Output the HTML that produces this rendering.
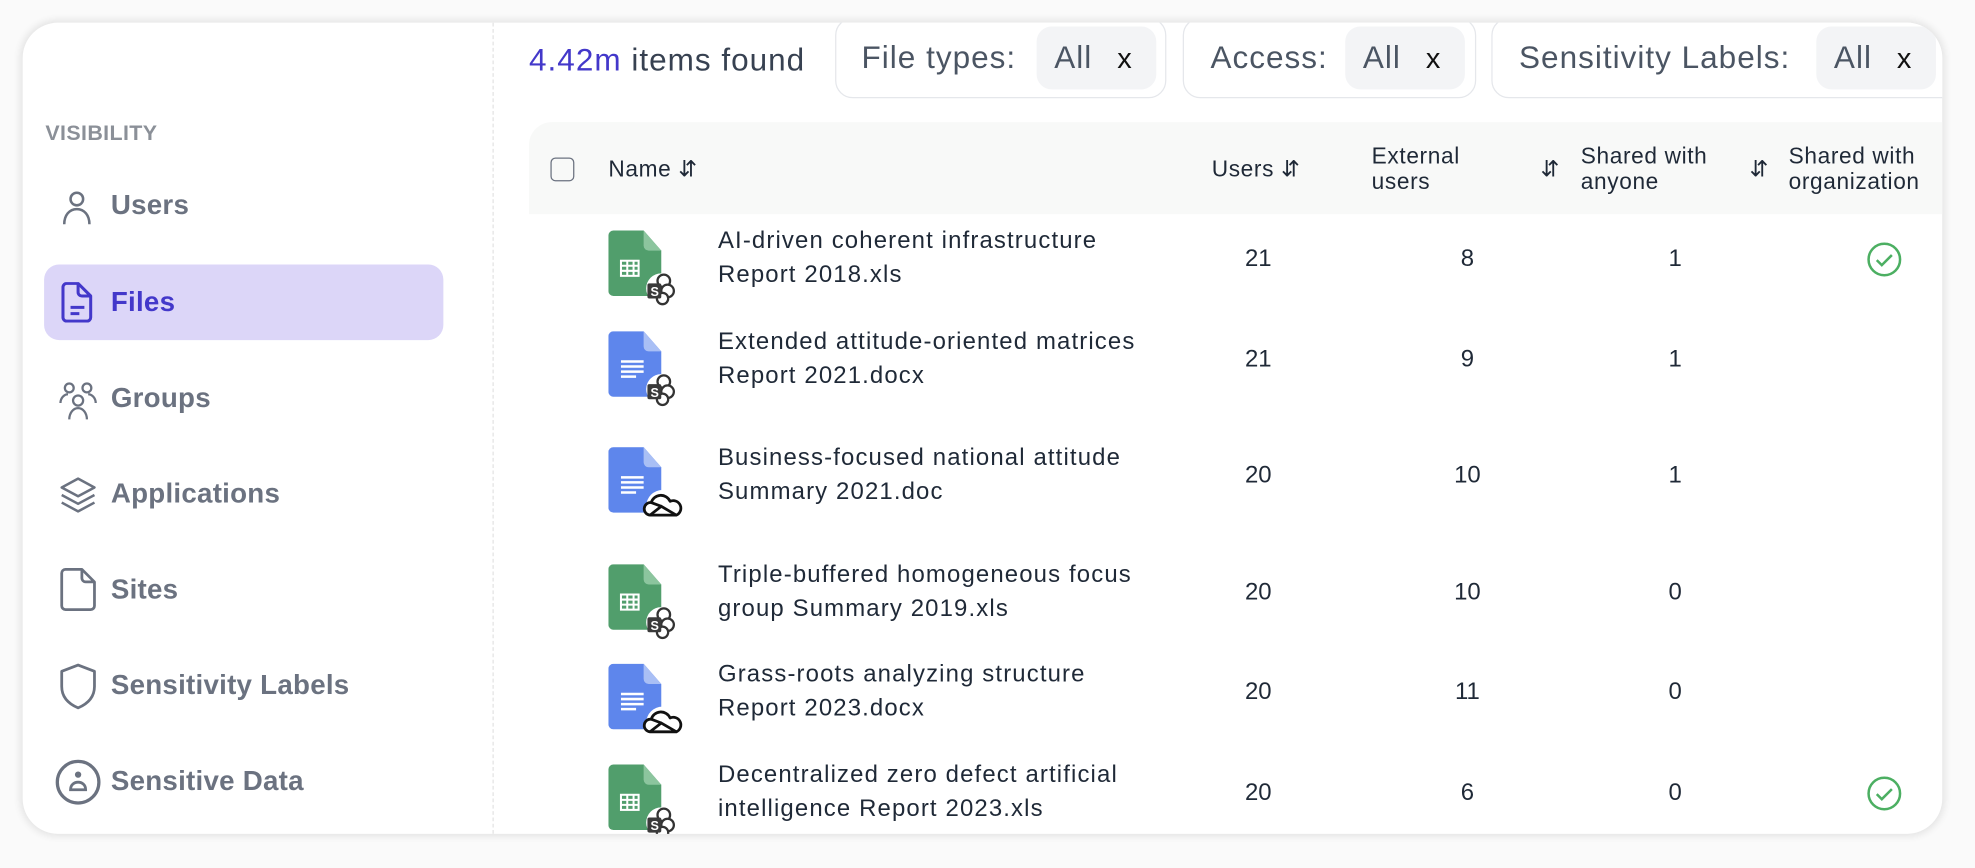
<!DOCTYPE html>
<html><head><meta charset="utf-8"><style>
html,body{margin:0;padding:0;width:1975px;height:867px;overflow:hidden;background:#fff;}
#w{position:absolute;left:0;top:0;width:1568px;height:689px;transform:scale(1.25957);transform-origin:0 0;font-family:"Liberation Sans",sans-serif;background:#fafafa;}
.card{position:absolute;left:18px;top:18px;width:1524px;height:644px;background:#fff;border-radius:28px;box-shadow:0 0 6px 2px rgba(0,0,0,.09);overflow:hidden;}
.abs{position:absolute;}
.vis{left:18px;top:78px;font-size:17px;font-weight:bold;color:#8b9098;letter-spacing:.3px;}
.nav{left:70px;font-size:22px;font-weight:bold;color:#6b7280;letter-spacing:.2px;}
.ico{left:28px;}
.sel{left:17px;top:192px;width:317px;height:60px;background:#dcd6f8;border-radius:12px;}
.dash{left:373px;top:0;height:644px;border-left:1px dashed #e3e3e3;}
.chip{border:1px solid #e5e7eb;border-radius:14px;height:62px;top:-4px;background:#fff;}
.chip span.l{position:absolute;top:17px;font-size:25px;color:#4b5563;letter-spacing:.8px;}
.pill{position:absolute;top:6px;height:50px;width:95px;background:#f3f4f6;border-radius:12px;}
.pill .a{position:absolute;left:14px;top:11px;font-size:25px;color:#4b5563;letter-spacing:.8px;}
.pill .x{position:absolute;left:64px;top:12px;font-size:23px;color:#111;}
.thead{left:402px;top:79px;width:1130px;height:73px;background:#f8f9f8;border-radius:18px 0 0 0;}
.th{font-size:18px;color:#1f2937;line-height:20px;letter-spacing:.5px;}
.row{font-size:19px;color:#1f2937;line-height:27px;letter-spacing:.9px;}
.num{font-size:19px;color:#1f2937;width:40px;text-align:center;}
</style></head><body><div id="w">
<div class="card">
<div class="abs dash"></div>
<div class="abs vis">VISIBILITY</div>
<div class="abs sel"></div>
<svg class="abs ico" style="top:131px" width="30" height="30" viewBox="0 0 30 30" fill="none" stroke="#6b7280" stroke-width="2"><circle cx="15" cy="9" r="5"/><path d="M5 29c0-7 4-12 10-12s10 5 10 12"/></svg>
<div class="abs nav" style="top:132px">Users</div>
<svg class="abs ico" style="top:206px" width="30" height="32" viewBox="0 0 30 32" fill="none" stroke="#4338ca" stroke-width="2.4" stroke-linejoin="round"><path d="M4 4a3 3 0 0 1 3-3h9l10 10v17a3 3 0 0 1-3 3H7a3 3 0 0 1-3-3z"/><path d="M16 1v7a3 3 0 0 0 3 3h7"/><path d="M10 20h11M10 25h7"/></svg>
<div class="abs nav" style="top:209px;color:#4338ca">Files</div>
<svg class="abs ico" style="top:284px" width="32" height="32" viewBox="0 0 32 32" fill="none" stroke="#6b7280" stroke-width="1.8"><circle cx="9" cy="6" r="3.5"/><circle cx="23" cy="6" r="3.5"/><circle cx="16" cy="16" r="4"/><path d="M2 18c0-4 3-7 6-7M30 18c0-4-3-7-6-7M9 31c0-5 3-9 7-9s7 4 7 9"/></svg>
<div class="abs nav" style="top:285px">Groups</div>
<svg class="abs ico" style="top:359px" width="32" height="32" viewBox="0 0 32 32" fill="none" stroke="#6b7280" stroke-width="2" stroke-linejoin="round"><path d="M16 3l13 7-13 7-13-7z"/><path d="M3 16l13 7 13-7"/><path d="M3 22l13 7 13-7"/></svg>
<div class="abs nav" style="top:361px">Applications</div>
<svg class="abs ico" style="top:432px" width="32" height="36" viewBox="0 0 32 36" fill="none" stroke="#6b7280" stroke-width="2.2" stroke-linejoin="round"><path d="M3 5a3 3 0 0 1 3-3h13l10 10v19a3 3 0 0 1-3 3H6a3 3 0 0 1-3-3z"/><path d="M19 2v7a3 3 0 0 0 3 3h7"/></svg>
<div class="abs nav" style="top:437px">Sites</div>
<svg class="abs ico" style="top:508px" width="32" height="38" viewBox="0 0 32 38" fill="none" stroke="#6b7280" stroke-width="2.2" stroke-linejoin="round"><path d="M16 2l13 5v12c0 9-6 14-13 17C9 33 3 28 3 19V7z"/></svg>
<div class="abs nav" style="top:513px">Sensitivity Labels</div>
<svg class="abs" style="left:25px;top:584px" width="38" height="38" viewBox="0 0 38 38" fill="none" stroke="#6b7280" stroke-width="2.6"><circle cx="19" cy="19" r="16.5"/><circle cx="19" cy="13" r="2.5" fill="#6b7280" stroke="none"/><path d="M13 25c0-4 3-6 6-6s6 2 6 6z" stroke-width="2.2"/></svg>
<div class="abs nav" style="top:589px">Sensitive Data</div>

<div class="abs" style="left:402px;top:16px;font-size:25px;color:#374151;letter-spacing:.8px"><span style="color:#4338ca">4.42m</span> items found</div>
<div class="abs chip" style="left:645px;width:261px"><span class="l" style="left:20px">File types:</span><div class="pill" style="left:159px"><span class="a">All</span><span class="x">x</span></div></div>
<div class="abs chip" style="left:921px;width:231px"><span class="l" style="left:21px">Access:</span><div class="pill" style="left:128px"><span class="a">All</span><span class="x">x</span></div></div>
<div class="abs chip" style="left:1166px;width:380px"><span class="l" style="left:21px">Sensitivity Labels:</span><div class="pill" style="left:257px"><span class="a">All</span><span class="x">x</span></div></div>

<div class="abs thead"></div>
<div class="abs" style="left:419px;top:107px;width:17px;height:17px;border:1.5px solid #6b7280;border-radius:4px"></div>
<div class="abs th" style="left:465px;top:106px">Name ⇵</div>
<div class="abs th" style="left:944px;top:106px">Users ⇵</div>
<div class="abs th" style="left:1071px;top:96px">External<br>users</div>
<div class="abs th" style="left:1205px;top:106px">⇵</div>
<div class="abs th" style="left:1237px;top:96px">Shared with<br>anyone</div>
<div class="abs th" style="left:1371px;top:106px">⇵</div>
<div class="abs th" style="left:1402px;top:96px">Shared with<br>organization</div>

<svg width="0" height="0" style="position:absolute"><defs>
<g id="sheet"><path d="M0 4a4 4 0 0 1 4-4h24l14 16v32a4 4 0 0 1-4 4H4a4 4 0 0 1-4-4z" fill="#519e6c"/><path d="M28 0v12a4 4 0 0 0 4 4h10z" fill="#8cc59e"/><g fill="none" stroke="#fff" stroke-width="1.6"><rect x="10" y="24" width="14" height="12"/><path d="M10 28h14M10 32h14M15 24v12M20 24v12"/></g></g>
<g id="doc"><path d="M0 4a4 4 0 0 1 4-4h24l14 16v32a4 4 0 0 1-4 4H4a4 4 0 0 1-4-4z" fill="#5e86ec"/><path d="M28 0v12a4 4 0 0 0 4 4h10z" fill="#a9bff5"/><g stroke="#fff" stroke-width="2"><path d="M10 24h18M10 28h18M10 32h18M10 36h12"/></g></g>
<g id="sp"><circle cx="42" cy="46" r="12" fill="#fff"/><circle cx="44" cy="40" r="5" fill="#fff" stroke="#333" stroke-width="1.8"/><circle cx="47" cy="48" r="5" fill="#fff" stroke="#333" stroke-width="1.8"/><circle cx="43" cy="54" r="4.5" fill="#fff" stroke="#333" stroke-width="1.8"/><rect x="31" y="42" width="11" height="12" rx="1.5" fill="#3a3a3a"/><text x="33.5" y="52" font-size="10" font-weight="bold" fill="#fff" font-family="Liberation Sans">S</text></g>
<g id="od"><circle cx="43" cy="47" r="13" fill="#fff"/><path d="M33 54a5 5 0 0 1 1-10 8 8 0 0 1 15-1 6 6 0 0 1 5 11z" fill="#fff" stroke="#111" stroke-width="2.2" stroke-linejoin="round"/><path d="M33 54l9-7 12 7M34 44l8 3" fill="none" stroke="#111" stroke-width="2.2"/></g>
</defs></svg>

<svg class="abs" style="left:465px;top:165px" width="60" height="62"><use href="#sheet"/><use href="#sp"/></svg>
<div class="abs row" style="left:552px;top:160px">AI-driven coherent infrastructure<br>Report 2018.xls</div>
<div class="abs num" style="left:961px;top:177px">21</div><div class="abs num" style="left:1127px;top:177px">8</div><div class="abs num" style="left:1292px;top:177px">1</div>
<svg class="abs" style="left:1464px;top:174px" width="28" height="28" viewBox="0 0 28 28" fill="none" stroke="#4caf62" stroke-width="2"><circle cx="14" cy="14" r="12.5"/><path d="M8 14.5l4 4 8-8"/></svg>

<svg class="abs" style="left:465px;top:245px" width="60" height="62"><use href="#doc"/><use href="#sp"/></svg>
<div class="abs row" style="left:552px;top:240px">Extended attitude-oriented matrices<br>Report 2021.docx</div>
<div class="abs num" style="left:961px;top:257px">21</div><div class="abs num" style="left:1127px;top:257px">9</div><div class="abs num" style="left:1292px;top:257px">1</div>

<svg class="abs" style="left:465px;top:337px" width="62" height="64"><use href="#doc"/><use href="#od"/></svg>
<div class="abs row" style="left:552px;top:332px">Business-focused national attitude<br>Summary 2021.doc</div>
<div class="abs num" style="left:961px;top:349px">20</div><div class="abs num" style="left:1127px;top:349px">10</div><div class="abs num" style="left:1292px;top:349px">1</div>

<svg class="abs" style="left:465px;top:430px" width="60" height="62"><use href="#sheet"/><use href="#sp"/></svg>
<div class="abs row" style="left:552px;top:425px">Triple-buffered homogeneous focus<br>group Summary 2019.xls</div>
<div class="abs num" style="left:961px;top:442px">20</div><div class="abs num" style="left:1127px;top:442px">10</div><div class="abs num" style="left:1292px;top:442px">0</div>

<svg class="abs" style="left:465px;top:509px" width="62" height="64"><use href="#doc"/><use href="#od"/></svg>
<div class="abs row" style="left:552px;top:504px">Grass-roots analyzing structure<br>Report 2023.docx</div>
<div class="abs num" style="left:961px;top:521px">20</div><div class="abs num" style="left:1127px;top:521px">11</div><div class="abs num" style="left:1292px;top:521px">0</div>

<svg class="abs" style="left:465px;top:589px" width="60" height="62"><use href="#sheet"/><use href="#sp"/></svg>
<div class="abs row" style="left:552px;top:584px">Decentralized zero defect artificial<br>intelligence Report 2023.xls</div>
<div class="abs num" style="left:961px;top:601px">20</div><div class="abs num" style="left:1127px;top:601px">6</div><div class="abs num" style="left:1292px;top:601px">0</div>
<svg class="abs" style="left:1464px;top:598px" width="28" height="28" viewBox="0 0 28 28" fill="none" stroke="#4caf62" stroke-width="2"><circle cx="14" cy="14" r="12.5"/><path d="M8 14.5l4 4 8-8"/></svg>
</div>
</div></body></html>
